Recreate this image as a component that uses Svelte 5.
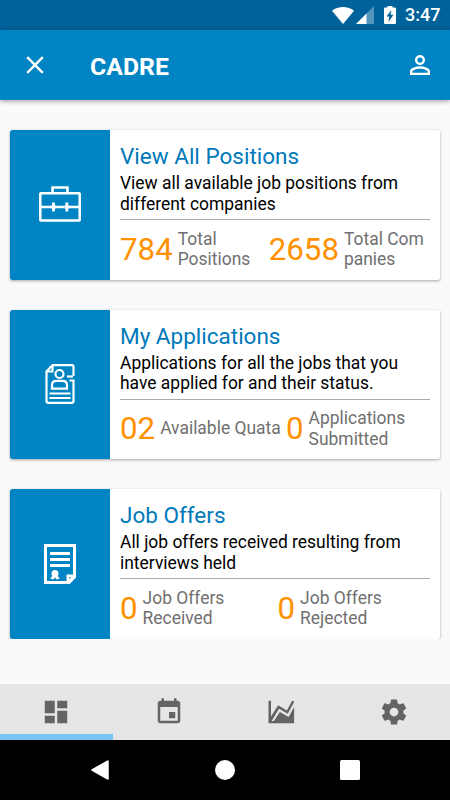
<script lang="ts">
  interface Stat {
    value: string;
    label: string[];
  }

  interface Card {
    icon: 'briefcase' | 'resume' | 'contract';
    title: string;
    text: string[];
    firstWidth: number;
    stats: Stat[];
  }

  const cards: Card[] = [
    {
      icon: 'briefcase',
      title: 'View All Positions',
      text: ['View all available job positions from', 'different companies'],
      firstWidth: 148.7,
      stats: [
        { value: '784', label: ['Total', 'Positions'] },
        { value: '2658', label: ['Total Com', 'panies'] },
      ],
    },
    {
      icon: 'resume',
      title: 'My Applications',
      text: ['Applications for all the jobs that you', 'have applied for and their status.'],
      firstWidth: 166,
      stats: [
        { value: '02', label: ['Available Quata'] },
        { value: '0', label: ['Applications', 'Submitted'] },
      ],
    },
    {
      icon: 'contract',
      title: 'Job Offers',
      text: ['All job offers received resulting from', 'interviews held'],
      firstWidth: 157.5,
      stats: [
        { value: '0', label: ['Job Offers', 'Received'] },
        { value: '0', label: ['Job Offers', 'Rejected'] },
      ],
    },
  ];

  const tabs = [
    { name: 'Dashboard', path: 'M3 13h8V3H3v10zm0 8h8v-6H3v6zm10 0h8V11h-8v10zm0-18v6h8V3h-8z' },
    { name: 'Calendar', path: 'M17 12h-5v5h5v-5zM16 1v2H8V1H6v2H5c-1.11 0-1.99.9-1.99 2L3 19c0 1.1.89 2 2 2h14c1.1 0 2-.9 2-2V5c0-1.1-.9-2-2-2h-1V1h-2zm3 18H5V8h14v11z' },
    { name: 'Statistics', path: 'M2 3h2v12.500L9.700 6.500l7 4.200L21 2.800l1.600 1-5.200 9.600-7-4.100L4.500 19.200h1.800l4.800-7.300 7 4.100L22.500 8v13H2z' },
    { name: 'Settings', path: 'M12 15.500A3.500 3.500 0 0 1 8.500 12 3.500 3.500 0 0 1 12 8.500a3.500 3.500 0 0 1 3.500 3.500 3.500 3.500 0 0 1-3.500 3.500m7.430-2.530c.04-.32.07-.64.07-.97s-.03-.66-.07-1l2.110-1.630c.19-.15.24-.42.12-.64l-2-3.460c-.12-.22-.39-.31-.61-.22l-2.490 1c-.52-.39-1.060-.73-1.690-.98l-.37-2.650A.506.506 0 0 0 14 2h-4c-.25 0-.46.18-.5.42l-.37 2.650c-.63.25-1.170.59-1.690.98l-2.490-1c-.22-.09-.49 0-.61.22l-2 3.460c-.13.22-.07.49.12.64L4.570 11c-.04.34-.07.67-.07 1s.03.65.07.97l-2.110 1.660c-.19.15-.25.42-.12.64l2 3.460c.12.22.39.3.61.22l2.490-1.010c.52.4 1.060.74 1.690.99l.37 2.650c.04.24.25.42.5.42h4c.25 0 .46-.18.5-.42l.37-2.650c.63-.26 1.170-.59 1.690-.99l2.490 1.010c.22.08.49 0 .61-.22l2-3.460c.12-.22.07-.49-.12-.64z' },
  ];

  let active = $state(0);
</script>

<div class="screen">
  <div class="status-bar">
    <svg class="wifi" width="22" height="17" viewBox="0 0 22 17"><path d="M0 3.800C6.200-1.200 15.800-1.200 22 3.800L11 17z" fill="#fff" /></svg>
    <svg class="signal" width="18" height="18" viewBox="0 0 18 18">
      <path d="M18 0v18H0z" fill="#fff" opacity=".32" />
      <path d="M10.500 7.500V18H0z" fill="#fff" />
    </svg>
    <svg class="battery" width="12" height="18" viewBox="0 0 12 18">
      <path d="M3.500 0h5v1.500H11q1 0 1 1V17q0 1-1 1H1q-1 0-1-1V2.500q0-1 1-1h2.500z" fill="#fff" />
      <path d="M7.300 4L2.500 10.500H5.400L4.500 16 9.500 8.700H6.500z" fill="#00629b" />
    </svg>
    <span class="clock">3:47</span>
  </div>

  <header class="toolbar">
    <button class="icon-button" aria-label="Close">
      <svg width="18" height="18" viewBox="0 0 18 18"><path d="M1.200 1.200l15.600 15.600M16.800 1.200L1.200 16.800" fill="none" stroke="#fff" stroke-width="2.400" /></svg>
    </button>
    <h1>CADRE</h1>
    <button class="icon-button profile" aria-label="Profile">
      <svg width="30" height="30" viewBox="0 0 24 24" fill="#fff">
        <path d="M12 5.900a2.100 2.100 0 1 1 0 4.200 2.100 2.100 0 0 1 0-4.200m0 9c2.970 0 6.100 1.460 6.100 2.100v1.100H5.900V17c0-.64 3.130-2.100 6.100-2.100M12 4C9.790 4 8 5.790 8 8s1.790 4 4 4 4-1.790 4-4-1.790-4-4-4zm0 9c-2.670 0-8 1.340-8 4v3h16v-3c0-2.660-5.330-4-8-4z" />
      </svg>
    </button>
  </header>

  <main>
    {#each cards as card (card.title)}
      <section class="card">
        <div class="card-icon">
          {#if card.icon === 'briefcase'}
            <svg class="briefcase" width="42" height="36" viewBox="0 0 42 36" fill="none" stroke="#fff" stroke-width="2.500">
              <rect x="1.300" y="7.300" width="39.400" height="27.200" rx=".5" />
              <path d="M13.500 7V1.500h15V7M1 21h11M17 21h8.500M30 21h11" />
              <path d="M14.500 16.500v9M27.800 16.500v9M12 21h5M25.500 21h5" stroke-width="2.800" />
            </svg>
          {:else if card.icon === 'resume'}
            <svg width="30" height="40" viewBox="0 0 30 40" fill="none" stroke="#fff" stroke-width="2.200">
              <path d="M28.500 12V2.500Q28.500 1.200 27 1.200H7.500L1.500 7.500V37Q1.500 38.800 3.500 38.800H26.500Q28.500 38.800 28.500 37V16.500H24.500" />
              <path d="M7.500 1v6.500h-6" />
              <path d="M22 12.500h6" />
              <circle cx="14.500" cy="10" r="4" />
              <path d="M7 24.700V21Q7 16.800 11.500 16.800h6Q22 16.800 22 21v3.700zM4.500 29.500h21M4.500 34h21" />
            </svg>
          {:else}
            <svg width="32" height="40" viewBox="0 0 32 40" fill="none" stroke="#fff">
              <path d="M1.500 1.500h29v31.500L25 38.500H1.500z" stroke-width="3" />
              <path d="M6 9.500h20M6 15.500h20M6 21.500h20" stroke-width="2.800" />
              <path d="M7.500 29.500a3.500 3.500 0 0 1 7 0q0 1.500-.8 2.500l2.300 2.500-2.200.3-.5 1.200-2.300-2.500L8.700 36l-.5-1.200-2.200-.3 2.300-2.500q-.8-1-.8-2.500z" fill="#fff" stroke="none" />
              <path d="M22.500 30.500H32V33l-6.500 7h-3z" fill="#fff" stroke="none" />
              <path d="M25.300 33.300h2l-2 2z" fill="#0084c3" stroke="none" />
            </svg>
          {/if}
        </div>
        <div class="card-body">
          <h2>{card.title}</h2>
          <p>
            {#each card.text as line}
              <span class="line">{line}</span>
            {/each}
          </p>
          <div class="stats">
            {#each card.stats as stat, i}
              <div class="stat" style:width={i === 0 ? `${card.firstWidth}px` : null}>
                <span class="value">{stat.value}</span>
                <span class="label">
                  {#each stat.label as line}
                    <span class="line">{line}</span>
                  {/each}
                </span>
              </div>
            {/each}
          </div>
        </div>
      </section>
    {/each}
  </main>

  <nav class="tabs">
    {#each tabs as tab, i (tab.name)}
      <button class="tab" class:active={active === i} aria-label={tab.name} onclick={() => (active = i)}>
        <svg width="30" height="30" viewBox="0 0 24 24" fill="#646464"><path d={tab.path} /></svg>
      </button>
    {/each}
  </nav>

  <div class="nav-bar">
    <svg width="20" height="20" viewBox="0 0 20 20"><path d="M18 1v18L2 10z" fill="#fff" stroke="#fff" stroke-width="1.500" stroke-linejoin="round" /></svg>
    <svg width="20" height="20" viewBox="0 0 20 20"><circle cx="10" cy="10" r="10" fill="#fff" /></svg>
    <svg width="20" height="20" viewBox="0 0 20 20"><rect width="20" height="20" rx="1.500" fill="#fff" /></svg>
  </div>
</div>

<style>
  :global(body) {
    margin: 0;
  }
  .screen {
    display: flex;
    flex-direction: column;
    width: 450px;
    height: 800px;
    overflow: hidden;
    background: #fafafa;
    font-family: Roboto, sans-serif;
  }
  svg {
    display: block;
    flex: none;
  }
  button {
    display: flex;
    align-items: center;
    justify-content: center;
    padding: 0;
    border: 0;
    background: none;
  }
  .status-bar {
    display: flex;
    flex: none;
    align-items: center;
    justify-content: flex-end;
    box-sizing: border-box;
    height: 30px;
    padding-right: 10px;
    background: #00629b;
  }
  .signal {
    margin-left: 2px;
  }
  .battery {
    margin-left: 10px;
  }
  .clock {
    width: 35px;
    margin-left: 9px;
    font-size: 18px;
    font-weight: 500;
    line-height: 32px;
    color: #fff;
    white-space: nowrap;
  }
  .toolbar {
    display: flex;
    flex: none;
    align-items: center;
    height: 70px;
    background: #0084c3;
    box-shadow: 0 1px 5px rgba(0, 0, 0, 0.4);
    z-index: 1;
  }
  .icon-button {
    width: 70px;
    height: 70px;
  }
  .profile {
    width: 60px;
    margin-left: auto;
  }
  h1 {
    margin: 2px 0 0 20px;
    font-size: 24.8px;
    font-weight: 700;
    color: #fff;
  }
  main {
    display: flex;
    flex: none;
    flex-direction: column;
    gap: 30px;
    box-sizing: border-box;
    height: 538.5px;
    padding: 30px 10px 0;
    overflow: hidden;
  }
  .card {
    display: flex;
    flex: none;
    height: 149.6px;
    border-radius: 2.5px;
    background: #fff;
    box-shadow: 0 1px 3px rgba(0, 0, 0, 0.34);
  }
  .card-icon {
    display: flex;
    align-items: center;
    justify-content: center;
    width: 100px;
    border-radius: 2.5px 0 0 2.5px;
    background: #0084c3;
  }
  .briefcase {
    margin-bottom: 2px;
  }
  .card-body {
    flex: 1;
    padding: 13px 10px 0;
  }
  h2 {
    margin: 0;
    font-size: 22.5px;
    font-weight: 400;
    line-height: 27px;
    color: #0079ba;
  }
  p {
    margin: 3px 0 0;
    font-size: 17.45px;
    line-height: 20.5px;
    color: #000;
  }
  .line {
    display: block;
    white-space: nowrap;
  }
  .stats {
    display: flex;
    align-items: center;
    height: 58px;
    margin-top: 5px;
    border-top: 1px solid #aaa;
  }
  .stat {
    display: flex;
    flex: none;
    align-items: center;
  }
  .value {
    font-size: 31.25px;
    line-height: 37px;
    color: #ff9100;
  }
  .label {
    margin-left: 5px;
    font-size: 17.45px;
    line-height: 20.4px;
    color: #707070;
  }
  .tabs {
    display: flex;
    flex: none;
    height: 56px;
    margin-top: auto;
    background: #e6e6e6;
  }
  .tab {
    flex: 1;
    box-sizing: border-box;
    border-bottom: 6px solid transparent;
    padding-top: 5px;
  }
  .tab.active {
    border-bottom-color: #78c4f3;
  }
  .nav-bar {
    display: flex;
    flex: none;
    align-items: center;
    justify-content: center;
    gap: 105px;
    height: 60px;
    background: #000;
  }
</style>
